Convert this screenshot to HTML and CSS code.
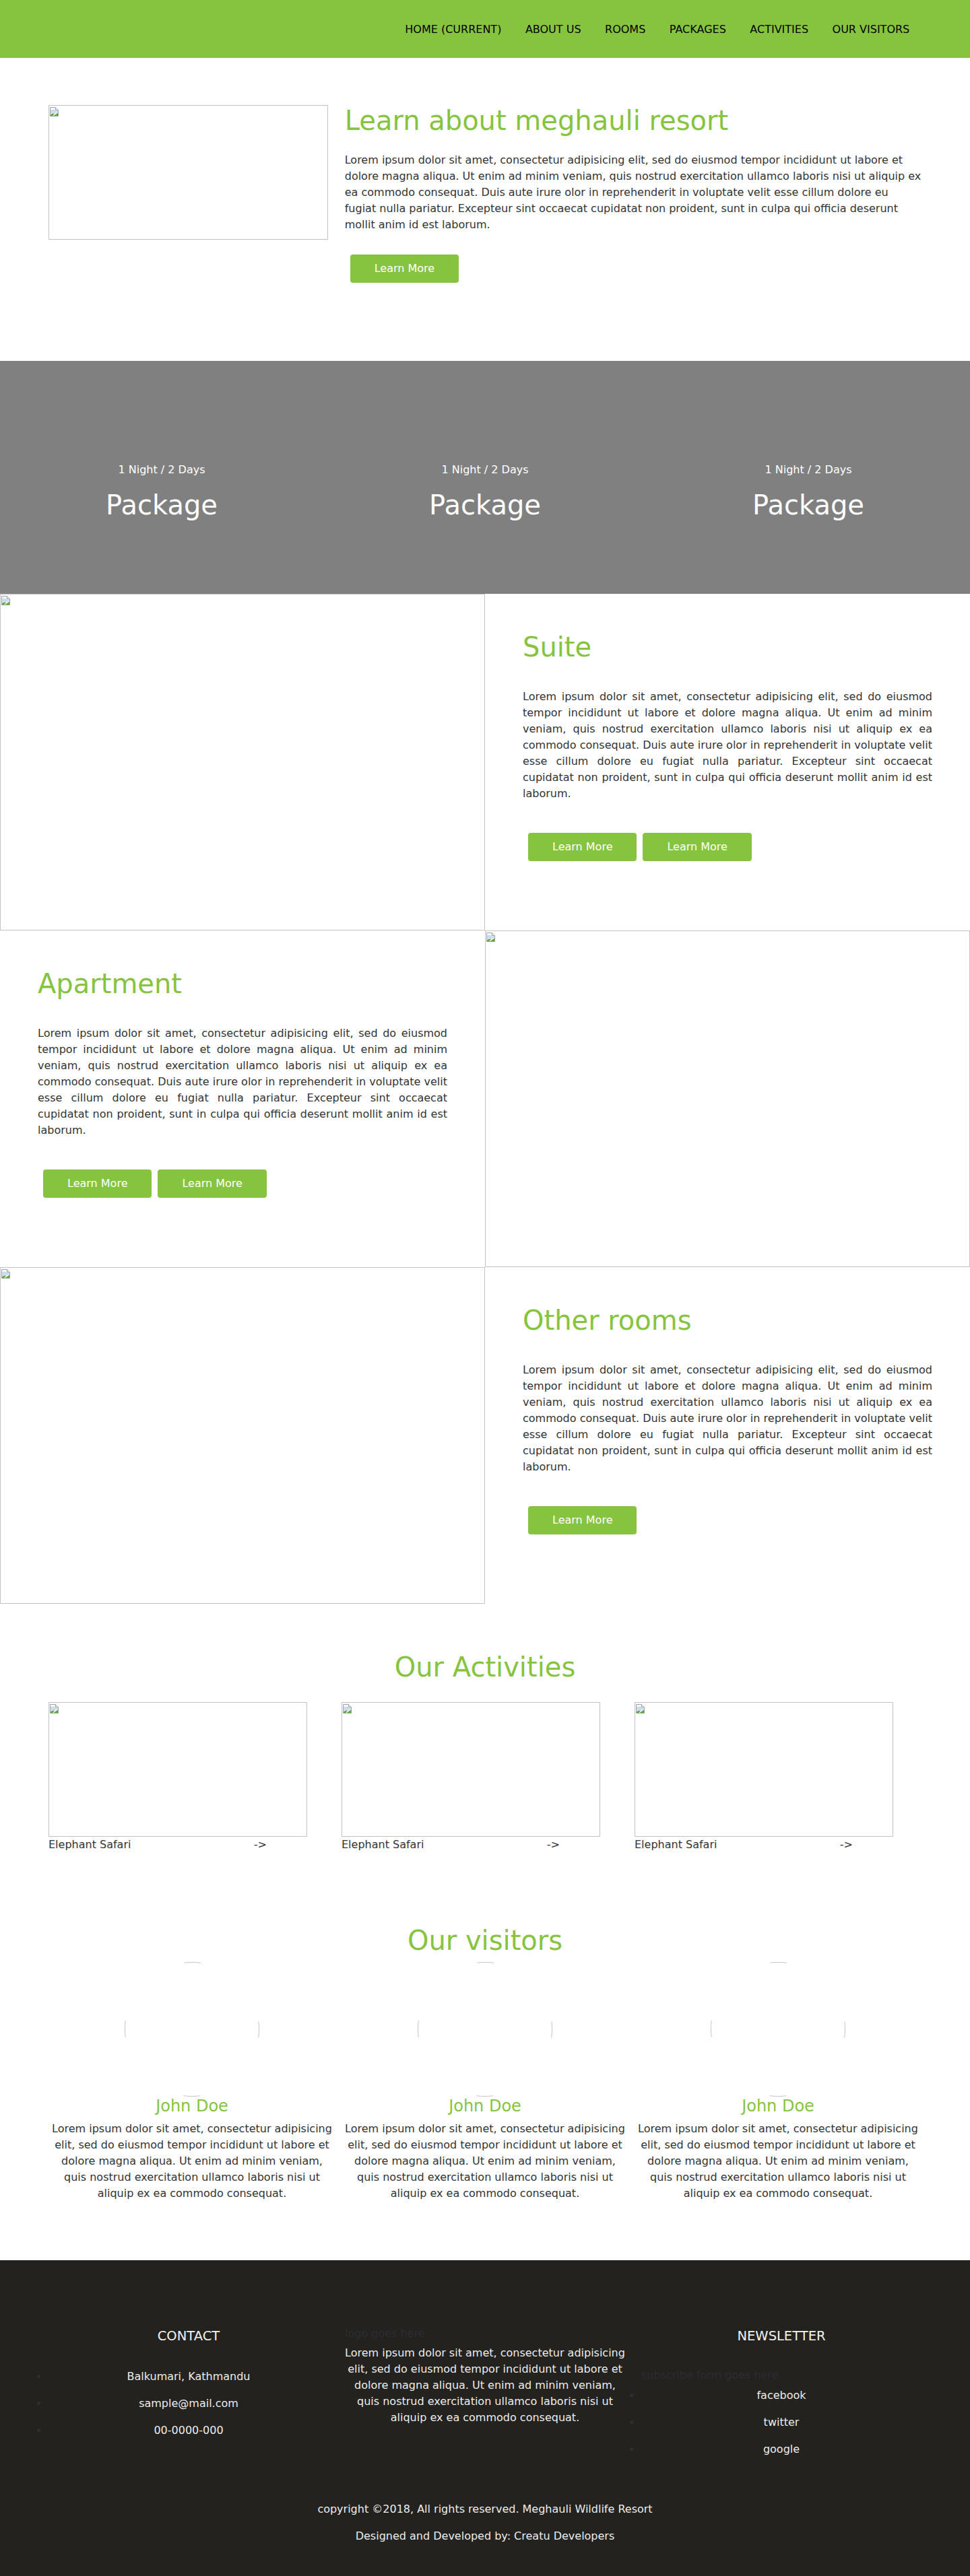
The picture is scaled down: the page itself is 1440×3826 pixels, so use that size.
FILE: index.html
```html
<!DOCTYPE html>
<html lang="en">
<head>
<meta charset="utf-8">
<title>Meghauli Resort</title>
<link rel="stylesheet" href="styles.css">
</head>
<body>
<nav class="topbar">
  <ul class="menu">
    <li><a href="#">HOME (CURRENT)</a></li>
    <li><a href="#">ABOUT US</a></li>
    <li><a href="#">ROOMS</a></li>
    <li><a href="#">PACKAGES</a></li>
    <li><a href="#">ACTIVITIES</a></li>
    <li><a href="#">OUR VISITORS</a></li>
  </ul>
</nav>

<section class="about">
  <div class="ph about-img"><svg class="bi" width="16" height="16" viewBox="0 0 16 16"><path d="M1.5 1.5h8l4 4v9h-12z" fill="#f3f6fa" stroke="#a3a3a3"/><path d="M9.5 1.5v4h4" fill="#e8e8e8" stroke="#a3a3a3"/><path d="M2 5h7v1.5h4V9L2 11z" fill="#cbdcf2"/><path d="M2 14V12.2Q5 9.8 8.2 10.6L5.2 14z" fill="#5ca83a"/><path d="M6.6 14l6.4-4.6V14z" fill="#5ca83a"/></svg></div>
  <div class="about-text">
    <h2 class="title">Learn about meghauli resort</h2>
    <p class="about-p">Lorem ipsum dolor sit amet, consectetur adipisicing elit, sed do eiusmod tempor incididunt ut labore et dolore magna aliqua. Ut enim ad minim veniam, quis nostrud exercitation ullamco laboris nisi ut aliquip ex ea commodo consequat. Duis aute irure olor in reprehenderit in voluptate velit esse cillum dolore eu fugiat nulla pariatur. Excepteur sint occaecat cupidatat non proident, sunt in culpa qui officia deserunt mollit anim id est laborum.</p>
    <div class="btns"><a class="btn" href="#">Learn More</a></div>
  </div>
</section>

<section class="packages">
  <div class="pkg"><div class="pkg-sub">1 Night / 2 Days</div><div class="pkg-name">Package</div></div>
  <div class="pkg"><div class="pkg-sub">1 Night / 2 Days</div><div class="pkg-name">Package</div></div>
  <div class="pkg"><div class="pkg-sub">1 Night / 2 Days</div><div class="pkg-name">Package</div></div>
</section>

<section class="room">
  <div class="ph room-img"><svg class="bi" width="16" height="16" viewBox="0 0 16 16"><path d="M1.5 1.5h8l4 4v9h-12z" fill="#f3f6fa" stroke="#a3a3a3"/><path d="M9.5 1.5v4h4" fill="#e8e8e8" stroke="#a3a3a3"/><path d="M2 5h7v1.5h4V9L2 11z" fill="#cbdcf2"/><path d="M2 14V12.2Q5 9.8 8.2 10.6L5.2 14z" fill="#5ca83a"/><path d="M6.6 14l6.4-4.6V14z" fill="#5ca83a"/></svg></div>
  <div class="room-text">
    <h2 class="title">Suite</h2>
    <p class="room-p">Lorem ipsum dolor sit amet, consectetur adipisicing elit, sed do eiusmod tempor incididunt ut labore et dolore magna aliqua. Ut enim ad minim veniam, quis nostrud exercitation ullamco laboris nisi ut aliquip ex ea commodo consequat. Duis aute irure olor in reprehenderit in voluptate velit esse cillum dolore eu fugiat nulla pariatur. Excepteur sint occaecat cupidatat non proident, sunt in culpa qui officia deserunt mollit anim id est laborum.</p>
    <div class="btns"><a class="btn" href="#">Learn More</a><a class="btn" href="#">Learn More</a></div>
  </div>
</section>

<section class="room">
  <div class="room-text">
    <h2 class="title">Apartment</h2>
    <p class="room-p">Lorem ipsum dolor sit amet, consectetur adipisicing elit, sed do eiusmod tempor incididunt ut labore et dolore magna aliqua. Ut enim ad minim veniam, quis nostrud exercitation ullamco laboris nisi ut aliquip ex ea commodo consequat. Duis aute irure olor in reprehenderit in voluptate velit esse cillum dolore eu fugiat nulla pariatur. Excepteur sint occaecat cupidatat non proident, sunt in culpa qui officia deserunt mollit anim id est laborum.</p>
    <div class="btns"><a class="btn" href="#">Learn More</a><a class="btn" href="#">Learn More</a></div>
  </div>
  <div class="ph room-img"><svg class="bi" width="16" height="16" viewBox="0 0 16 16"><path d="M1.5 1.5h8l4 4v9h-12z" fill="#f3f6fa" stroke="#a3a3a3"/><path d="M9.5 1.5v4h4" fill="#e8e8e8" stroke="#a3a3a3"/><path d="M2 5h7v1.5h4V9L2 11z" fill="#cbdcf2"/><path d="M2 14V12.2Q5 9.8 8.2 10.6L5.2 14z" fill="#5ca83a"/><path d="M6.6 14l6.4-4.6V14z" fill="#5ca83a"/></svg></div>
</section>

<section class="room">
  <div class="ph room-img"><svg class="bi" width="16" height="16" viewBox="0 0 16 16"><path d="M1.5 1.5h8l4 4v9h-12z" fill="#f3f6fa" stroke="#a3a3a3"/><path d="M9.5 1.5v4h4" fill="#e8e8e8" stroke="#a3a3a3"/><path d="M2 5h7v1.5h4V9L2 11z" fill="#cbdcf2"/><path d="M2 14V12.2Q5 9.8 8.2 10.6L5.2 14z" fill="#5ca83a"/><path d="M6.6 14l6.4-4.6V14z" fill="#5ca83a"/></svg></div>
  <div class="room-text">
    <h2 class="title">Other rooms</h2>
    <p class="room-p">Lorem ipsum dolor sit amet, consectetur adipisicing elit, sed do eiusmod tempor incididunt ut labore et dolore magna aliqua. Ut enim ad minim veniam, quis nostrud exercitation ullamco laboris nisi ut aliquip ex ea commodo consequat. Duis aute irure olor in reprehenderit in voluptate velit esse cillum dolore eu fugiat nulla pariatur. Excepteur sint occaecat cupidatat non proident, sunt in culpa qui officia deserunt mollit anim id est laborum.</p>
    <div class="btns"><a class="btn" href="#">Learn More</a></div>
  </div>
</section>

<section class="activities">
  <h2 class="title center">Our Activities</h2>
  <div class="act-grid">
    <div class="act">
      <div class="ph act-img"><svg class="bi" width="16" height="16" viewBox="0 0 16 16"><path d="M1.5 1.5h8l4 4v9h-12z" fill="#f3f6fa" stroke="#a3a3a3"/><path d="M9.5 1.5v4h4" fill="#e8e8e8" stroke="#a3a3a3"/><path d="M2 5h7v1.5h4V9L2 11z" fill="#cbdcf2"/><path d="M2 14V12.2Q5 9.8 8.2 10.6L5.2 14z" fill="#5ca83a"/><path d="M6.6 14l6.4-4.6V14z" fill="#5ca83a"/></svg></div>
      <div class="act-cap"><span>Elephant Safari</span><span>-&gt;</span></div>
    </div>
    <div class="act">
      <div class="ph act-img"><svg class="bi" width="16" height="16" viewBox="0 0 16 16"><path d="M1.5 1.5h8l4 4v9h-12z" fill="#f3f6fa" stroke="#a3a3a3"/><path d="M9.5 1.5v4h4" fill="#e8e8e8" stroke="#a3a3a3"/><path d="M2 5h7v1.5h4V9L2 11z" fill="#cbdcf2"/><path d="M2 14V12.2Q5 9.8 8.2 10.6L5.2 14z" fill="#5ca83a"/><path d="M6.6 14l6.4-4.6V14z" fill="#5ca83a"/></svg></div>
      <div class="act-cap"><span>Elephant Safari</span><span>-&gt;</span></div>
    </div>
    <div class="act">
      <div class="ph act-img"><svg class="bi" width="16" height="16" viewBox="0 0 16 16"><path d="M1.5 1.5h8l4 4v9h-12z" fill="#f3f6fa" stroke="#a3a3a3"/><path d="M9.5 1.5v4h4" fill="#e8e8e8" stroke="#a3a3a3"/><path d="M2 5h7v1.5h4V9L2 11z" fill="#cbdcf2"/><path d="M2 14V12.2Q5 9.8 8.2 10.6L5.2 14z" fill="#5ca83a"/><path d="M6.6 14l6.4-4.6V14z" fill="#5ca83a"/></svg></div>
      <div class="act-cap"><span>Elephant Safari</span><span>-&gt;</span></div>
    </div>
  </div>
</section>

<section class="visitors">
  <h2 class="title center">Our visitors</h2>
  <div class="vis-grid">
    <div class="visitor">
      <svg class="avatar" width="200" height="200" viewBox="0 0 200 200"><circle cx="100" cy="100" r="99.5" fill="none" stroke="#c4c4c4" stroke-width="1" stroke-dasharray="25 131.3" stroke-dashoffset="12.5"/></svg>
      <h3 class="vis-name">John Doe</h3>
      <p class="vis-p">Lorem ipsum dolor sit amet, consectetur adipisicing elit, sed do eiusmod tempor incididunt ut labore et dolore magna aliqua. Ut enim ad minim veniam, quis nostrud exercitation ullamco laboris nisi ut aliquip ex ea commodo consequat.</p>
    </div>
    <div class="visitor">
      <svg class="avatar" width="200" height="200" viewBox="0 0 200 200"><circle cx="100" cy="100" r="99.5" fill="none" stroke="#c4c4c4" stroke-width="1" stroke-dasharray="25 131.3" stroke-dashoffset="12.5"/></svg>
      <h3 class="vis-name">John Doe</h3>
      <p class="vis-p">Lorem ipsum dolor sit amet, consectetur adipisicing elit, sed do eiusmod tempor incididunt ut labore et dolore magna aliqua. Ut enim ad minim veniam, quis nostrud exercitation ullamco laboris nisi ut aliquip ex ea commodo consequat.</p>
    </div>
    <div class="visitor">
      <svg class="avatar" width="200" height="200" viewBox="0 0 200 200"><circle cx="100" cy="100" r="99.5" fill="none" stroke="#c4c4c4" stroke-width="1" stroke-dasharray="25 131.3" stroke-dashoffset="12.5"/></svg>
      <h3 class="vis-name">John Doe</h3>
      <p class="vis-p">Lorem ipsum dolor sit amet, consectetur adipisicing elit, sed do eiusmod tempor incididunt ut labore et dolore magna aliqua. Ut enim ad minim veniam, quis nostrud exercitation ullamco laboris nisi ut aliquip ex ea commodo consequat.</p>
    </div>
  </div>
</section>

<footer class="footer">
  <div class="foot-cols">
    <div class="foot-col">
      <h4 class="foot-h">CONTACT</h4>
      <ul class="foot-list contact-list">
        <li>Balkumari, Kathmandu</li>
        <li>sample@mail.com</li>
        <li>00-0000-000</li>
      </ul>
    </div>
    <div class="foot-col foot-mid">
      <div class="logo-ph">logo goes here</div>
      <p class="foot-p">Lorem ipsum dolor sit amet, consectetur adipisicing elit, sed do eiusmod tempor incididunt ut labore et dolore magna aliqua. Ut enim ad minim veniam, quis nostrud exercitation ullamco laboris nisi ut aliquip ex ea commodo consequat.</p>
    </div>
    <div class="foot-col">
      <h4 class="foot-h">NEWSLETTER</h4>
      <div class="subscribe">subscribe form goes here</div>
      <ul class="foot-list social-list">
        <li>facebook</li>
        <li>twitter</li>
        <li>google</li>
      </ul>
    </div>
  </div>
  <div class="copy">
    <p class="copy-line">copyright ©2018, All rights reserved. Meghauli Wildlife Resort</p>
    <p class="copy-line second">Designed and Developed by: Creatu Developers</p>
  </div>
</footer>
</body>
</html>
```

FILE: styles.css
```css
* { box-sizing: border-box; }

body {
  margin: 0;
  font-family: "DejaVu Sans", "Noto Sans", sans-serif;
  font-size: 16px;
  color: #333;
  background: #fff;
}

/* ---------- top bar ---------- */
.topbar {
  background: #86c440;
  height: 86px;
  display: flex;
  align-items: center;
  justify-content: flex-end;
  padding-right: 72px;
}
.menu {
  list-style: none;
  margin: 0;
  padding: 0;
  display: flex;
}
.menu a {
  display: block;
  padding: 0 17.75px;
  font-size: 16px;
  line-height: 19px;
  color: #000;
  text-decoration: none;
}

/* ---------- shared ---------- */
.title {
  margin: 0;
  font-size: 40px;
  line-height: 47px;
  font-weight: normal;
  color: #86c440;
}
.title.center { text-align: center; }

.ph {
  border: 1px solid #c3c3c3;
  background: #fff;
}
.bi { display: block; margin-top: 1px; }

.btns {
  display: flex;
  gap: 9px;
  padding-left: 8px;
}
.btn {
  display: inline-block;
  height: 42px;
  line-height: 42px;
  padding: 0 36px;
  background: #86c440;
  color: #fff;
  font-size: 16px;
  border-radius: 4px;
  text-decoration: none;
}

/* ---------- about ---------- */
.about {
  width: 90%;
  margin: 0 auto;
  display: flex;
  align-items: flex-start;
  padding: 70px 0 116px;
}
.about-img {
  width: 32%;
  height: 200px;
  flex: none;
}
.about-text {
  flex: 1;
  margin-left: 25px;
}
.about-p {
  margin: 23px 0 32px;
  line-height: 24px;
}

/* ---------- packages ---------- */
.packages {
  background: #808080;
  height: 346px;
  padding-top: 152px;
  display: grid;
  grid-template-columns: repeat(3, 1fr);
  text-align: center;
  color: #fff;
}
.pkg-sub {
  font-size: 16px;
  line-height: 19px;
}
.pkg-name {
  margin-top: 20px;
  font-size: 40px;
  line-height: 47px;
}

/* ---------- rooms ---------- */
.room {
  display: grid;
  grid-template-columns: 1fr 1fr;
  height: 500px;
}
.room-img { height: 500px; }
.room-text {
  padding: 56px 56px 0;
}
.room-p {
  margin: 37.5px 0 46.5px;
  line-height: 24px;
  text-align: justify;
}

/* ---------- activities ---------- */
.activities {
  width: 90%;
  margin: 0 auto;
  padding-top: 71px;
}
.act-grid {
  margin-top: 28.3px;
  display: grid;
  grid-template-columns: repeat(3, 384px);
  column-gap: 51px;
}
.act-img { height: 200px; }
.act-cap {
  width: 324px;
  display: flex;
  justify-content: space-between;
  line-height: 24px;
}

/* ---------- visitors ---------- */
.visitors {
  padding: 106.5px 0 87px;
}
.vis-grid {
  margin-top: 8.2px;
  display: grid;
  grid-template-columns: repeat(3, 432px);
  column-gap: 3px;
  justify-content: center;
}
.visitor {
  text-align: center;
  padding: 0 6px;
}
.avatar {
  display: block;
  margin: 0 auto;
}
.vis-name {
  margin: 0;
  font-size: 24px;
  line-height: 28px;
  font-weight: normal;
  color: #86c440;
}
.vis-p {
  margin: 8px 0 0;
  line-height: 24px;
}

/* ---------- footer ---------- */
.footer {
  background: #23221f;
  color: #ececec;
  padding: 101px 0 46.8px;
}
.foot-cols {
  width: 90%;
  margin: 0 auto;
  display: grid;
  grid-template-columns: 416px 1fr 416px;
  align-items: start;
}
.foot-h {
  margin: 0;
  font-size: 19.5px;
  line-height: 23px;
  font-weight: normal;
  text-align: center;
  color: #f2f2f2;
}
.foot-list {
  margin: 0;
  padding: 0;
  list-style: disc outside;
}
.foot-list li {
  line-height: 24px;
  margin-bottom: 16px;
  text-align: center;
}
.foot-list li:last-child { margin-bottom: 0; }
.foot-list li::marker { color: #2e2f3a; }
.contact-list { margin-top: 37.5px; }
.social-list { margin-top: 5.3px; }
.subscribe {
  margin-top: 35.5px;
  line-height: 24px;
  color: #2c2d34;
}
.foot-mid { padding: 0 22px; }
.logo-ph {
  margin: -3.5px 0 0 2px;
  line-height: 24px;
  color: #2c2d34;
}
.foot-p {
  margin: 5px 0 0;
  line-height: 24px;
  text-align: center;
}
.copy {
  margin-top: 65.4px;
  text-align: center;
}
.copy-line {
  margin: 0;
  line-height: 24px;
}
.copy-line.second { margin-top: 16px; }
```
